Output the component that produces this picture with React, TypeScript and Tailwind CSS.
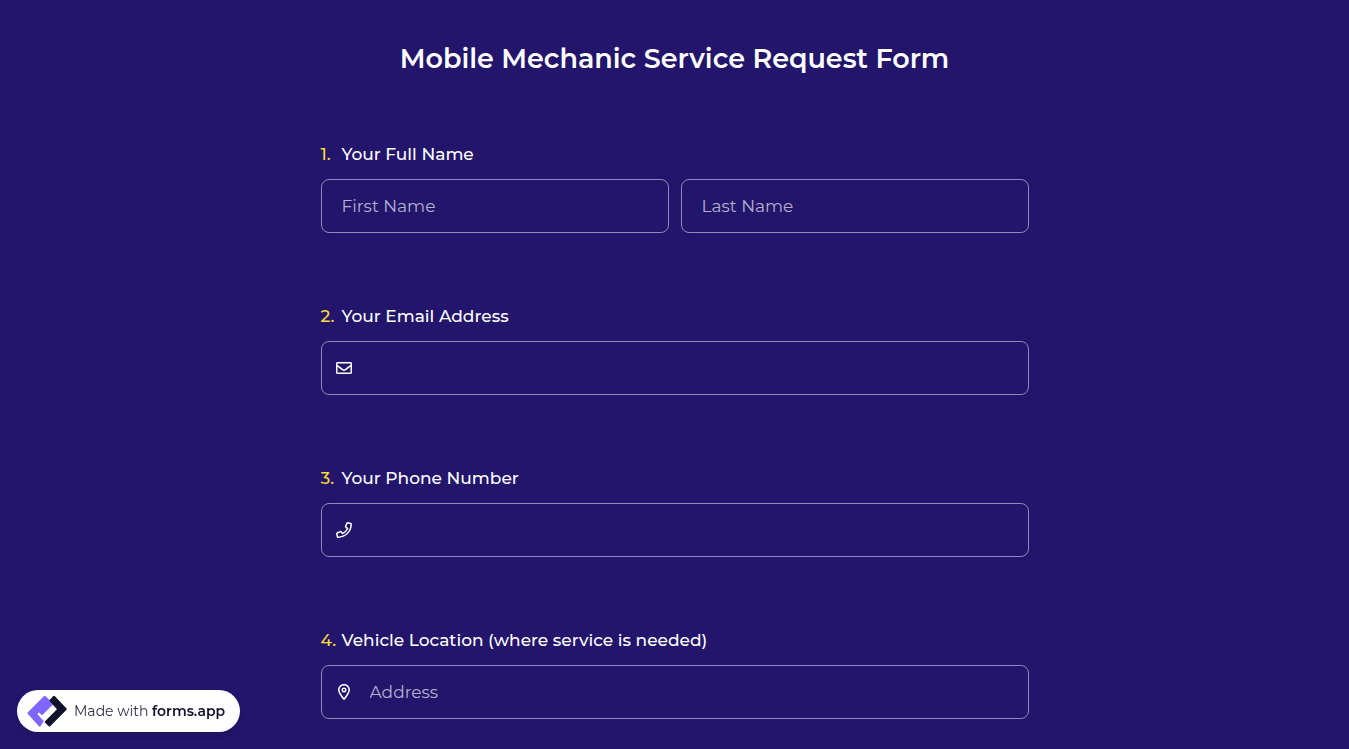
import type { ReactNode } from "react";
import { FaRegEnvelope } from "react-icons/fa";

function PhoneIcon() {
  return (
    <svg viewBox="0 0 512 512" className="size-4" fill="currentColor" aria-hidden="true">
      <path d="M476.5 22.9L382.3 1.2c-21.6-5-43.6 6.2-52.3 26.6l-43.5 101.5c-8 18.6-2.6 40.6 13.1 53.4l40 32.7C311 267.8 267.8 311 215.4 339.5l-32.7-40c-12.8-15.7-34.8-21.1-53.4-13.1L27.7 329.9c-20.4 8.7-31.5 30.7-26.6 52.3l21.7 94.2c4.8 20.9 23.2 35.5 44.6 35.5C312.3 512 512 313.7 512 67.5c0-21.4-14.6-39.8-35.5-44.6zM69.3 464l-20.9-90.7 98.2-42.1 55.7 68.1c98.8-46.4 150.6-98 197-197l-68.1-55.7 42.1-98.2L464 69.3C463 286.9 286.9 463 69.3 464z" />
    </svg>
  );
}

function LocationIcon() {
  return (
    <svg viewBox="0 0 384 512" className="h-4 w-3" fill="currentColor" aria-hidden="true">
      <path d="M336 192c0-79.5-64.5-144-144-144S48 112.5 48 192c0 12.4 4.5 31.6 15.3 57.2c10.5 24.8 25.4 52.2 42.5 79.9c28.5 46.2 61.5 90.8 86.2 122.6c24.8-31.8 57.8-76.4 86.2-122.6c17.1-27.7 32-55.1 42.5-79.9C331.5 223.6 336 204.4 336 192zm48 0c0 87.4-117 243-168.3 307.2c-12.3 15.3-35.1 15.3-47.4 0C117 435 0 279.4 0 192C0 86 86 0 192 0S384 86 384 192zm-160 0a32 32 0 1 0 -64 0 32 32 0 1 0 64 0zm-112 0a80 80 0 1 1 160 0 80 80 0 1 1 -160 0z" />
    </svg>
  );
}

function Logo() {
  return (
    <svg viewBox="0 0 40 33" className="h-[33px] w-10 shrink-0" strokeWidth="2" strokeLinejoin="round" aria-hidden="true">
      <path fill="#7f66ff" stroke="#7f66ff" d="M17.8 1.8 25 9 15 19 12 16 9 18.8 15.6 26.3 12.7 30.6 1.4 18.2Z" />
      <path fill="#12122e" stroke="#12122e" d="M27 1.8 38.8 14.1 22.5 30.6 18.8 27 31.4 14.2 23.4 5.6Z" />
    </svg>
  );
}

const boxStyle =
  "flex h-[54px] min-w-0 flex-1 items-center rounded-lg border border-[#9089b5] focus-within:border-white";
const inputStyle =
  "h-full w-full min-w-0 bg-transparent text-[17px] text-white outline-none placeholder:text-[#b5b0ce] placeholder:opacity-100";

type QuestionProps = { number: number; label: string; htmlFor: string; children: ReactNode };

function Question({ number, label, htmlFor, children }: QuestionProps) {
  return (
    <div className="flex flex-col gap-[13px]">
      <label htmlFor={htmlFor} className="flex text-[17px] leading-6 font-medium text-white">
        <span className="w-[21px] shrink-0 text-[#fcdc35]">{number}.</span>
        <span>{label}</span>
      </label>
      <div className="flex gap-3">{children}</div>
    </div>
  );
}

type IconFieldProps = { id: string; type: string; icon: ReactNode; placeholder?: string };

function IconField({ id, type, icon, placeholder }: IconFieldProps) {
  return (
    <div className={boxStyle}>
      <span className="flex w-11 shrink-0 justify-center text-white">{icon}</span>
      <input id={id} type={type} placeholder={placeholder} className={`${inputStyle} px-1`} />
    </div>
  );
}

export default function App() {
  return (
    <div className="min-h-screen bg-[#22156b] font-['Montserrat','Inter',sans-serif]">
      <main className="mx-auto w-full max-w-[740px] px-4 pt-[41px] pb-[30px]">
        <h1 className="text-center text-[27px] leading-9 font-semibold text-white">
          Mobile Mechanic Service Request Form
        </h1>
        <form className="mt-[65px] flex flex-col gap-[71px]">
          <Question number={1} label="Your Full Name" htmlFor="first-name">
            <div className={boxStyle}>
              <input id="first-name" type="text" placeholder="First Name" className={`${inputStyle} px-5`} />
            </div>
            <div className={boxStyle}>
              <input type="text" aria-label="Last Name" placeholder="Last Name" className={`${inputStyle} px-5`} />
            </div>
          </Question>
          <Question number={2} label="Your Email Address" htmlFor="email">
            <IconField id="email" type="email" icon={<FaRegEnvelope className="size-4" />} />
          </Question>
          <Question number={3} label="Your Phone Number" htmlFor="phone">
            <IconField id="phone" type="tel" icon={<PhoneIcon />} />
          </Question>
          <Question number={4} label="Vehicle Location (where service is needed)" htmlFor="address">
            <IconField id="address" type="text" icon={<LocationIcon />} placeholder="Address" />
          </Question>
        </form>
      </main>
      <a
        href="#"
        className="fixed bottom-[17px] left-[17px] flex h-[42px] items-center gap-[7px] rounded-full bg-white pr-[15px] pl-[10px] text-sm text-[#2f2f4a] shadow-md"
      >
        <Logo />
        <span className="whitespace-nowrap">
          Made with <strong className="font-semibold text-[#12122e]">forms.app</strong>
        </span>
      </a>
    </div>
  );
}
